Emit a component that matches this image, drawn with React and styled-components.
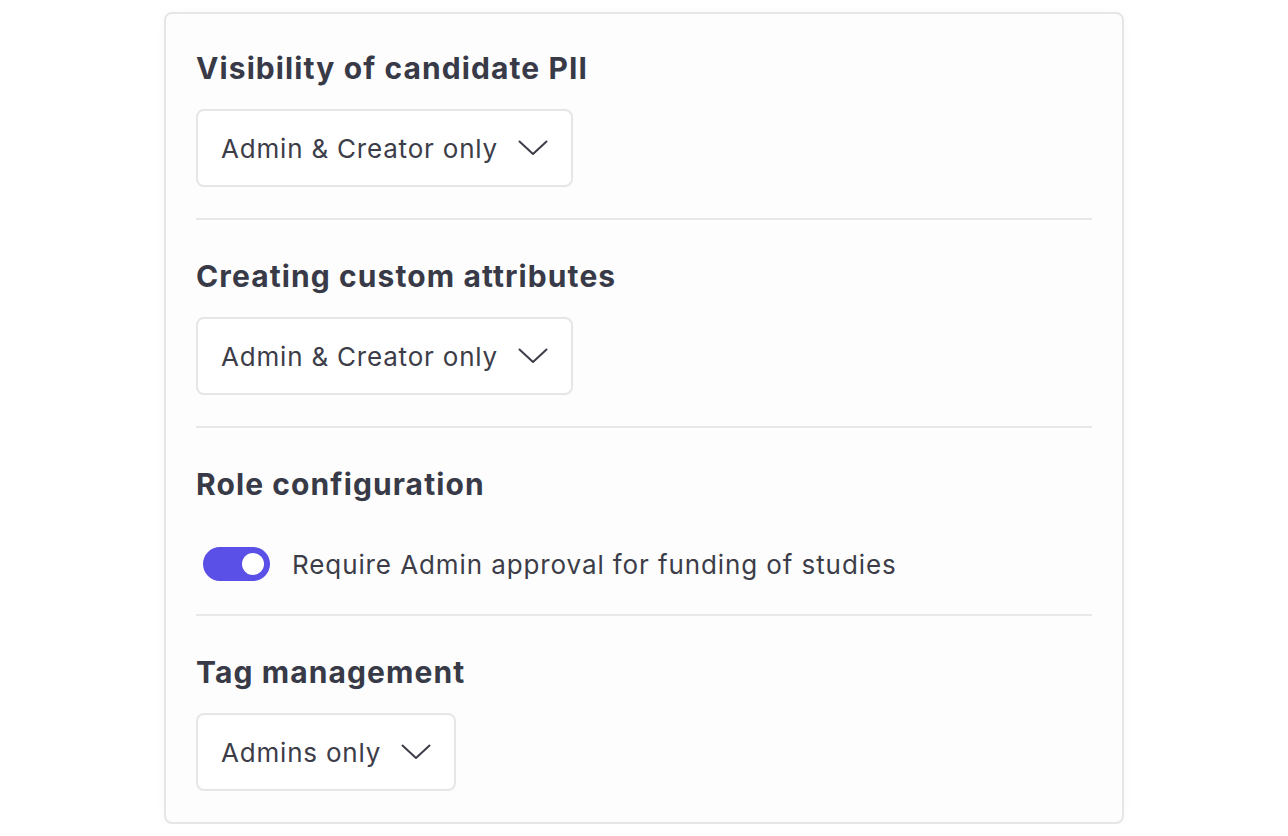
import React, { useState } from "react";
import styled, { createGlobalStyle } from "styled-components";

const Global = createGlobalStyle`
  html, body { margin: 0; padding: 0; background: #ffffff; }
  body { font-family: Inter, "Noto Sans", sans-serif; -webkit-font-smoothing: antialiased; }
  * { box-sizing: border-box; }
`;

const Page = styled.div`
  padding: 12px 0 0 164px;
`;

const Card = styled.div`
  width: 960px;
  height: 812px;
  background: #fdfdfd;
  border: 2px solid #e6e6e9;
  border-radius: 8px;
  box-shadow: 0 0 12px rgba(0, 0, 0, 0.025);
  padding: 0 30px 0 30px;
  overflow: hidden;
`;

const Section = styled.section`
  padding: ${(p) => (p.$first ? "36px" : "38px")} 0 ${(p) => p.$bottom}px;
  border-bottom: ${(p) => (p.$last ? "none" : "2px solid #e8e8eb")};
`;

const Heading = styled.h2`
  margin: 0;
  font-size: 30px;
  line-height: 36px;
  font-weight: 700;
  color: #383a47;
  letter-spacing: 1.1px;
`;

const Select = styled.button`
  margin-top: 23px;
  height: 78px;
  display: inline-flex;
  align-items: center;
  gap: 20px;
  padding: 0 23px 0 23px;
  background: #ffffff;
  border: 2px solid #e6e6e9;
  border-radius: 8px;
  font-family: inherit;
  font-size: 26px;
  letter-spacing: 0.8px;
  color: #3c3d48;
  cursor: pointer;
`;

const Chevron = () => (
  <svg width="30" height="16" viewBox="0 0 30 16" fill="none">
    <polyline points="1.5,1.5 15,14 28.5,1.5" stroke="#3c3d48" strokeWidth="2" strokeLinecap="round" strokeLinejoin="round" />
  </svg>
);

const ToggleRow = styled.label`
  margin-top: 45px;
  display: flex;
  align-items: center;
  gap: 22px;
  padding-left: 7px;
  font-size: 26px;
  letter-spacing: 0.9px;
  color: #3c3d48;
  cursor: pointer;
`;

const Track = styled.span`
  position: relative;
  width: 67px;
  height: 34px;
  border-radius: 17px;
  background: ${(p) => (p.$on ? "#5a4fe6" : "#d4d4d8")};
  flex-shrink: 0;
`;

const Knob = styled.span`
  position: absolute;
  top: 6px;
  left: ${(p) => (p.$on ? "39px" : "6px")};
  width: 22px;
  height: 22px;
  border-radius: 50%;
  background: #ffffff;
`;

function Dropdown({ value }) {
  return (
    <Select type="button">
      <span>{value}</span>
      <Chevron />
    </Select>
  );
}

export default function App() {
  const [on, setOn] = useState(true);
  return (
    <>
      <Global />
      <Page>
        <Card>
          <Section $first $bottom={31}>
            <Heading>Visibility of candidate PII</Heading>
            <Dropdown value="Admin & Creator only" />
          </Section>
          <Section $bottom={31}>
            <Heading>Creating custom attributes</Heading>
            <Dropdown value="Admin & Creator only" />
          </Section>
          <Section $bottom={33}>
            <Heading>Role configuration</Heading>
            <ToggleRow onClick={() => setOn(!on)}>
              <Track $on={on}>
                <Knob $on={on} />
              </Track>
              Require Admin approval for funding of studies
            </ToggleRow>
          </Section>
          <Section $last $bottom={30}>
            <Heading>Tag management</Heading>
            <Dropdown value="Admins only" />
          </Section>
        </Card>
      </Page>
    </>
  );
}
